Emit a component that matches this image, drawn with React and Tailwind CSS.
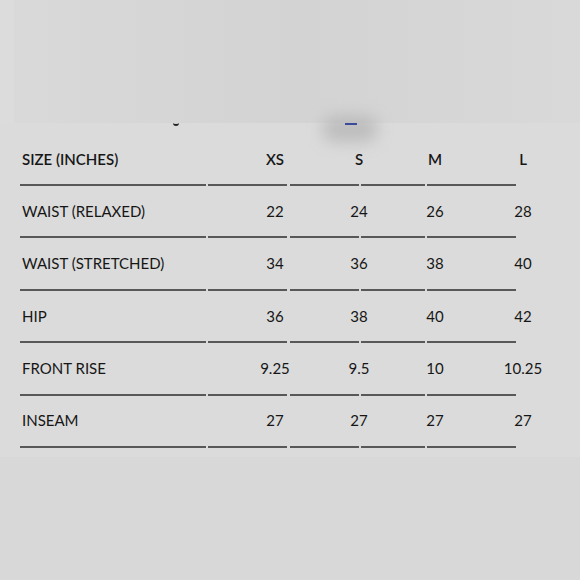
import React from 'react';

const rows = [
  { label: "WAIST (RELAXED)", values: ["22", "24", "26", "28"] },
  { label: "WAIST (STRETCHED)", values: ["34", "36", "38", "40"] },
  { label: "HIP", values: ["36", "38", "40", "42"] },
  { label: "FRONT RISE", values: ["9.25", "9.5", "10", "10.25"] },
  { label: "INSEAM", values: ["27", "27", "27", "27"] },
];

const cellWidths = ["w-[86px]", "w-[82px]", "w-[70px]", "w-[106px]"];

function Rule() {
  return (
    <div className="flex h-[2px] pl-[20px]">
      <div className="w-[186px] bg-[#585858]" />
      <div className="w-[79px] ml-[2px] bg-[#585858]" />
      <div className="w-[69px] ml-[3px] bg-[#585858]" />
      <div className="w-[64px] ml-[2px] bg-[#585858]" />
      <div className="w-[89px] ml-[2px] bg-[#585858]" />
    </div>
  );
}

function Row({ label, values, bold }) {
  return (
    <div className={`flex items-center h-[50.4px] pl-[22px] ${bold ? "font-semibold" : ""}`}>
      <div className="w-[210px]">{label}</div>
      {values.map((v, i) => (
        <div key={i} className={`${cellWidths[i]} text-center`}>{v}</div>
      ))}
    </div>
  );
}

export default function App() {
  return (
    <div className="w-[580px] h-[580px] bg-[#dbdbdb] text-[#161616] text-[15px] relative overflow-hidden" style={{ fontFamily: 'Lato, "Open Sans", sans-serif' }}>
      <div className="h-[123px] bg-[#d8d8d8] flex">
        <div className="w-[14px] bg-[#dcdcdc]" />
        <div className="flex-1 bg-gradient-to-r from-[#d9d9d9] via-[#d3d3d3] to-[#d9d9d9]" />
      </div>
      <div className="absolute left-[322px] top-[116px] w-[56px] h-[26px] rounded-full bg-[#b0b0b0] blur-[8px] opacity-70" />
      <div className="absolute left-[345px] top-[123px] w-[12px] h-[2px] bg-[#3b4a9a]" />
      <div className="absolute left-[173px] top-[122px] w-[6px] h-[4px] border-b-2 border-[#222] rounded-b-full" />
      <div className="pt-[10.6px] relative">
        <Row label="SIZE (INCHES)" values={["XS", "S", "M", "L"]} bold />
        <Rule />
        {rows.map((r) => (
          <React.Fragment key={r.label}>
            <Row label={r.label} values={r.values} />
            <Rule />
          </React.Fragment>
        ))}
      </div>
      <div className="absolute left-0 right-0 top-[457px] bottom-0 bg-[#d8d8d8]" />
    </div>
  );
}
